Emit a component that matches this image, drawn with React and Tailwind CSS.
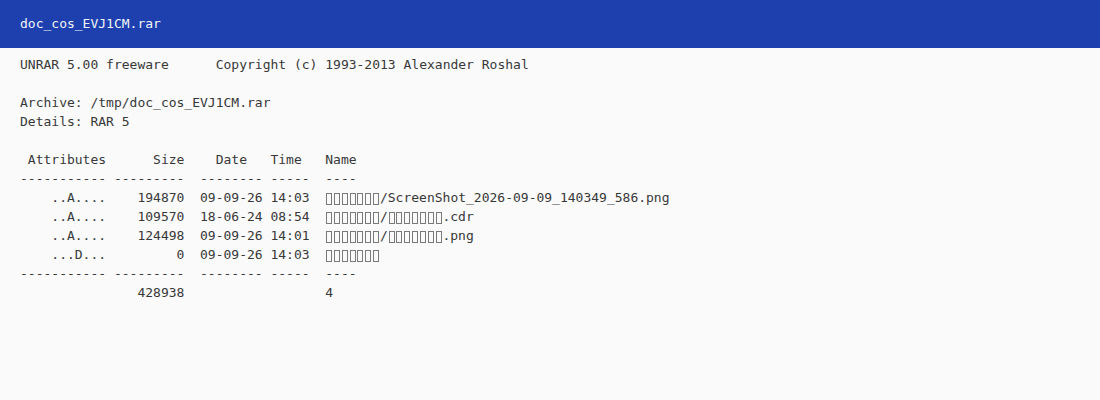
import React from "react";

// Undecodable name characters render as empty boxes, one character cell each
const Boxes = ({ n }) => (
  <>
    {Array.from({ length: n }).map((_, i) => (
      <span
        key={i}
        className="inline-block w-[6px] h-[12px] ml-[0.9px] mr-[0.927px] border border-[#7a7a7a] align-[-3px]"
      />
    ))}
  </>
);

const rows = [
  { attr: "..A....", size: "194870", date: "09-09-26 14:03", name: [7, "/ScreenShot_2026-09-09_140349_586.png"] },
  { attr: "..A....", size: "109570", date: "18-06-24 08:54", name: [7, "/", 7, ".cdr"] },
  { attr: "..A....", size: "124498", date: "09-09-26 14:01", name: [7, "/", 7, ".png"] },
  { attr: "...D...", size: "     0", date: "09-09-26 14:03", name: [7] },
];

const App = () => {
  return (
    <div className="min-h-[400px] bg-[#fafafa] font-['DejaVu_Sans_Mono',monospace]">
      {/* Title bar */}
      <div className="h-12 flex items-center px-5 bg-[#1e40af] text-[13px] text-[#f1f5f9]">
        doc_cos_EVJ1CM.rar
      </div>

      {/* Listing */}
      <pre className="px-5 pt-[7px] text-[13px] leading-[19px] text-[#383838] font-['DejaVu_Sans_Mono',monospace]">
        {"UNRAR 5.00 freeware      Copyright (c) 1993-2013 Alexander Roshal\n"}
        {"\n"}
        {"Archive: /tmp/doc_cos_EVJ1CM.rar\n"}
        {"Details: RAR 5\n"}
        {"\n"}
        {" Attributes      Size    Date   Time   Name\n"}
        {"----------- ---------  -------- -----  ----\n"}
        {rows.map((r, i) => (
          <React.Fragment key={i}>
            {`    ${r.attr}    ${r.size}  ${r.date}  `}
            {r.name.map((part, j) =>
              typeof part === "number" ? <Boxes key={j} n={part} /> : <React.Fragment key={j}>{part}</React.Fragment>
            )}
            {"\n"}
          </React.Fragment>
        ))}
        {"----------- ---------  -------- -----  ----\n"}
        {"               428938                  4"}
      </pre>
    </div>
  );
};

export default App;
